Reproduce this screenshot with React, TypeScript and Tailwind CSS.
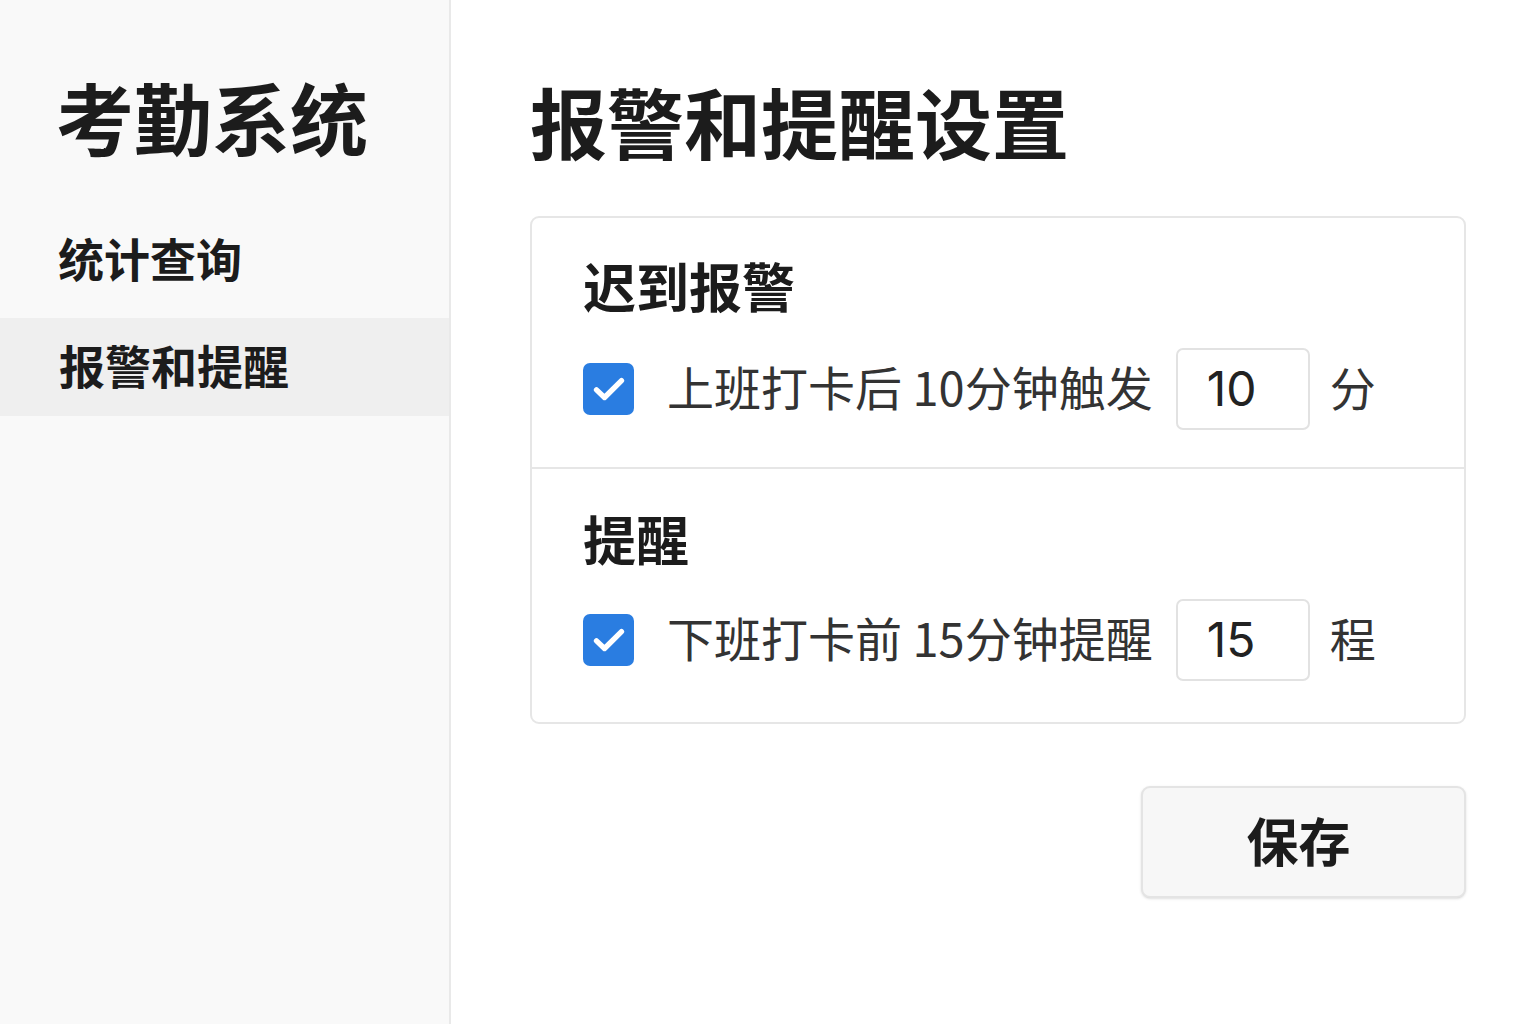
import React, { useState } from 'react';

const FONT = { fontFamily: '"Noto Sans CJK SC", "Noto Sans", sans-serif' };
const NUM_FONT = { fontFamily: 'Inter, "Noto Sans CJK SC", sans-serif' };

function CheckBox({ checked, onToggle }: { checked: boolean; onToggle: () => void }) {
  return (
    <button
      onClick={onToggle}
      className={`w-[51px] h-[52px] rounded-[7px] flex items-center justify-center shrink-0 ${
        checked ? 'bg-[#2a7de1]' : 'bg-white border-2 border-[#cfcfcf]'
      }`}
    >
      {checked && (
        <svg className="w-[40px] h-[40px]" viewBox="0 0 24 24" fill="none">
          <path d="M4.5 12.5l4.8 4.6L19.5 7" stroke="white" strokeWidth="3.2" strokeLinecap="round" strokeLinejoin="round" />
        </svg>
      )}
    </button>
  );
}

function SettingRow({ label, value, unit }: { label: React.ReactNode; value: string; unit: string }) {
  const [checked, setChecked] = useState(true);
  const [val, setVal] = useState(value);
  return (
    <div className="flex items-center h-[81px]">
      <CheckBox checked={checked} onToggle={() => setChecked(!checked)} />
      <span className="ml-[33px] -mt-[6px] text-[47px] leading-none text-[#333] whitespace-nowrap">{label}</span>
      <input
        value={val}
        onChange={(e) => setVal(e.target.value)}
        className="ml-[23px] w-[134px] h-[82px] border-2 border-[#e2e2e2] rounded-[7px] pl-[29px] text-[48px] text-[#222] outline-none"
        style={NUM_FONT}
      />
      <span className="ml-[20px] -mt-[6px] text-[46px] leading-none text-[#333]">{unit}</span>
    </div>
  );
}

export default function App() {
  const [active, setActive] = useState('alarm');

  return (
    <div className="flex w-full min-h-screen h-[1024px] bg-white" style={FONT}>
      <aside className="w-[451px] shrink-0 bg-[#f9f9f9] border-r-2 border-[#e9e9e9] pt-[77px]">
        <h1 className="pl-[56px] text-[78px] leading-none font-bold text-[#1c1c1c]">考勤系统</h1>
        <nav className="mt-[56px] flex flex-col gap-[9px]">
          <div
            onClick={() => setActive('stats')}
            className={`h-[98px] pl-[58px] flex items-center text-[46px] font-bold text-[#1c1c1c] cursor-pointer ${
              active === 'stats' ? 'bg-[#efefef]' : ''
            }`}
          >
            <span className="-mt-[6px]">统计查询</span>
          </div>
          <div
            onClick={() => setActive('alarm')}
            className={`h-[98px] pl-[59px] flex items-center text-[46px] font-bold text-[#1c1c1c] cursor-pointer ${
              active === 'alarm' ? 'bg-[#efefef]' : ''
            }`}
          >
            <span className="-mt-[6px]">报警和提醒</span>
          </div>
        </nav>
      </aside>

      <main className="flex-1 pl-[79px] pr-[70px] pt-[82px] flex flex-col">
        <h2 className="text-[77px] leading-none font-bold text-[#1c1c1c]">报警和提醒设置</h2>

        <div className="mt-[57px] border-2 border-[#e6e6e6] rounded-[9px] bg-white">
          <section className="pl-[51px] pt-[41px] pb-[38px] border-b-2 border-[#e6e6e6]">
            <h3 className="text-[53px] leading-none font-bold text-[#1c1c1c]">迟到报警</h3>
            <div className="mt-[36px]">
              <SettingRow label="上班打卡后 10分钟触发" value="10" unit="分" />
            </div>
          </section>
          <section className="pl-[51px] pt-[43px] pb-[42px]">
            <h3 className="text-[53px] leading-none font-bold text-[#1c1c1c]">提醒</h3>
            <div className="mt-[34px]">
              <SettingRow label="下班打卡前 15分钟提醒" value="15" unit="程" />
            </div>
          </section>
        </div>

        <div className="mt-[62px] flex justify-end">
          <button className="w-[325px] h-[112px] bg-[#f7f7f7] border-2 border-[#e4e4e4] rounded-[9px] text-[52px] font-bold text-[#1c1c1c] shadow-sm">
            <span className="block -ml-[10px] -mt-[4px]">保存</span>
          </button>
        </div>
      </main>
    </div>
  );
}
